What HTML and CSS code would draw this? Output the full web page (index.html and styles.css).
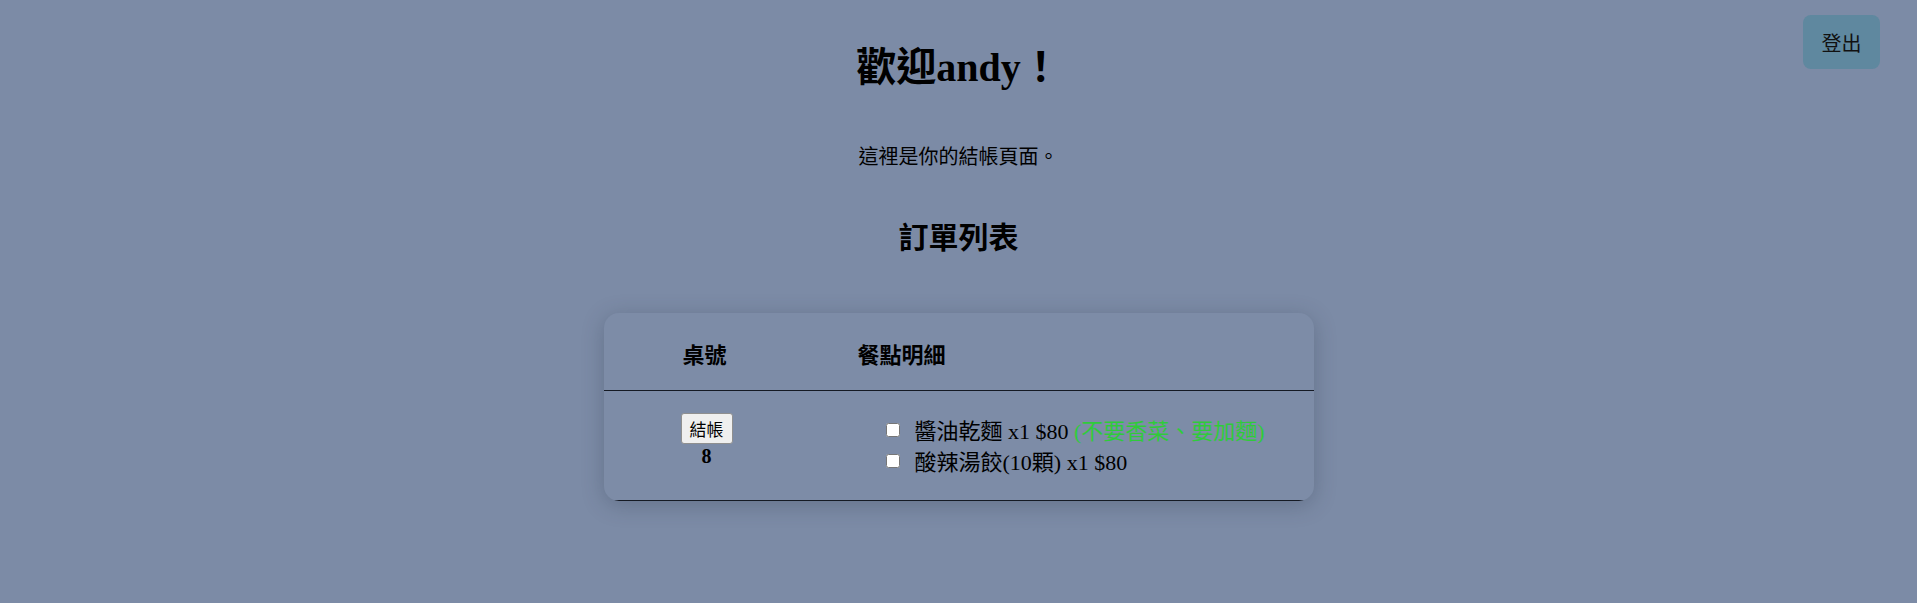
FILE: index.html
```html
<!DOCTYPE html>
<html lang="zh-Hant">
<head>
<meta charset="utf-8">
<title>結帳頁面</title>
<link rel="stylesheet" href="styles.css">
</head>
<body>
<button class="logout">登出</button>
<main class="page">
  <h1 class="title">歡迎andy！</h1>
  <p class="intro">這裡是你的結帳頁面。</p>
  <h2 class="subtitle">訂單列表</h2>
  <div class="card">
    <table class="orders">
      <thead>
        <tr>
          <th class="col-table">桌號</th>
          <th class="col-items">餐點明細</th>
        </tr>
      </thead>
      <tbody>
        <tr>
          <td class="col-table">
            <button class="checkout">結帳</button>
            <div class="table-no">8</div>
          </td>
          <td class="col-items">
            <ul class="items">
              <li class="item"><input type="checkbox" class="check">醬油乾麵 x1 $80 <span class="note">(不要香菜、要加麵)</span></li>
              <li class="item"><input type="checkbox" class="check">酸辣湯餃(10顆) x1 $80</li>
            </ul>
          </td>
        </tr>
      </tbody>
    </table>
  </div>
</main>
</body>
</html>
```
FILE: styles.css
```css
html, body {
  margin: 0;
  padding: 0;
}
body {
  background: #7c8ba6;
  color: #000;
  font-family: "Liberation Serif", "Noto Sans CJK TC", serif;
  min-height: 603px;
}
.page {
  display: flex;
  flex-direction: column;
  align-items: center;
  padding-top: 44px;
}
.title {
  margin: 0;
  font-size: 40px;
  line-height: 48px;
  font-weight: bold;
}
.intro {
  margin: 52px 0 0;
  font-size: 20px;
  line-height: 24px;
  font-family: "Noto Sans CJK TC", sans-serif;
}
.subtitle {
  margin: 49px 0 0;
  font-size: 30px;
  line-height: 36px;
  font-weight: bold;
  font-family: "Noto Sans CJK TC", sans-serif;
}
.card {
  margin-top: 60px;
  width: 710px;
  border-radius: 15px;
  overflow: hidden;
  background: #7d8ca7;
  box-shadow: 0 4px 22px rgba(40, 50, 70, 0.28);
}
.orders {
  width: 100%;
  border-collapse: collapse;
}
.orders th {
  height: 75px;
  padding: 2px 0 0;
  font-size: 22px;
  line-height: 30px;
  font-weight: bold;
  font-family: "Noto Sans CJK TC", sans-serif;
  border-bottom: 1px solid #151a24;
  vertical-align: middle;
}
.orders th.col-table {
  width: 202px;
  text-align: center;
}
.orders th.col-items {
  text-align: left;
  padding-left: 52px;
}
.orders td {
  border-bottom: 1px solid #151a24;
  vertical-align: top;
}
.orders td.col-table {
  padding: 22px 0 0;
  text-align: center;
}
.orders td.col-items {
  padding: 25px 0 22px 80px;
}
.checkout {
  display: block;
  margin: 0 auto;
  width: 52px;
  height: 31px;
  padding: 0;
  font-family: "Noto Sans CJK TC", sans-serif;
  font-size: 17px;
  line-height: 29px;
  color: #000;
  background: #efefef;
  border: 1px solid #8f8f8f;
  border-radius: 3px;
  position: relative;
  left: 2px;
}
.table-no {
  font-size: 20px;
  line-height: 24px;
  font-weight: bold;
  margin-top: 0;
  position: relative;
  left: 2px;
}
.items {
  list-style: none;
  margin: 0;
  padding: 0;
}
.item {
  font-size: 22px;
  line-height: 31px;
  white-space: nowrap;
}
.check {
  width: 14px;
  height: 14px;
  margin: 0 15px 0 0;
  vertical-align: 2px;
}
.note {
  color: #2fcb3a;
}
.logout {
  position: fixed;
  top: 15px;
  right: 37px;
  width: 77px;
  height: 54px;
  padding: 2px 0 0;
  border: none;
  border-radius: 8px;
  background: #5f889f;
  color: #111;
  font-family: "Noto Sans CJK TC", sans-serif;
  font-size: 20px;
  line-height: 26px;
}
```
